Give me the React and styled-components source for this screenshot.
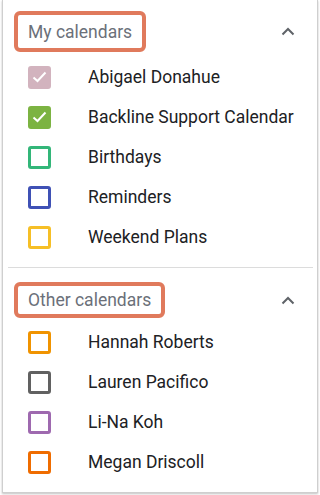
import React from "react";
import styled, { createGlobalStyle } from "styled-components";

const Global = createGlobalStyle`
  html, body { margin: 0; padding: 0; background: #ffffff; }
  body { font-family: Roboto, "Noto Sans", Arial, sans-serif; }
`;

const Page = styled.div`
  padding-left: 2px;
  width: 320px;
  height: 495px;
  box-sizing: border-box;
  overflow: hidden;
`;

const Panel = styled.div`
  width: 316px;
  height: 493px;
  box-sizing: border-box;
  background: #fff;
  border: 1px solid #cfcfcf;
  border-top: none;
  box-shadow: 0 1px 2px rgba(0, 0, 0, 0.25);
  display: flex;
  flex-direction: column;
`;

const Section = styled.section`
  display: flex;
  flex-direction: column;
  padding-top: ${(p) => p.$top}px;
`;

const Header = styled.div`
  display: flex;
  align-items: center;
  justify-content: space-between;
  padding: 0 22px 0 11px;
`;

const Title = styled.span`
  box-sizing: border-box;
  height: ${(p) => p.$h}px;
  display: inline-flex;
  align-items: center;
  padding: 0 10px;
  border: 4px solid #e07a5c;
  border-radius: 6px;
  color: #6b7079;
  font-size: 17.5px;
`;

const Chevron = () => (
  <svg width="14" height="9" viewBox="0 0 14 9">
    <polyline
      points="1.5,7.5 7,2 12.5,7.5"
      fill="none"
      stroke="#5f6368"
      strokeWidth="2"
    />
  </svg>
);

const List = styled.ul`
  list-style: none;
  margin: ${(p) => p.$gap}px 0 0;
  padding: 0;
`;

const Row = styled.li`
  height: 40px;
  display: flex;
  align-items: center;
  gap: 37px;
  padding-left: 25px;
  color: #202124;
  font-size: 17.5px;
`;

const Box = styled.span`
  box-sizing: border-box;
  width: 23px;
  height: 23px;
  border-radius: 3px;
  border: 3px solid ${(p) => p.$color};
  background: ${(p) => (p.$checked ? p.$color : "transparent")};
  display: inline-flex;
  align-items: center;
  justify-content: center;
  flex: none;
`;

const Divider = styled.hr`
  border: none;
  border-top: 1px solid #dcdcdc;
  margin: 10px 4px 0 5px;
`;

const Check = () => (
  <svg width="15" height="12" viewBox="0 0 15 12">
    <polyline
      points="1.5,6.5 5.5,10 13.5,1.5"
      fill="none"
      stroke="#ffffff"
      strokeWidth="2"
    />
  </svg>
);

const mine = [
  { name: "Abigael Donahue", color: "#d2b3be", checked: true },
  { name: "Backline Support Calendar", color: "#7cb342", checked: true },
  { name: "Birthdays", color: "#33b679" },
  { name: "Reminders", color: "#3f51b5" },
  { name: "Weekend Plans", color: "#f6bf26" },
];

const others = [
  { name: "Hannah Roberts", color: "#f09300" },
  { name: "Lauren Pacifico", color: "#616161" },
  { name: "Li-Na Koh", color: "#9e69af" },
  { name: "Megan Driscoll", color: "#ef6c00" },
];

const Calendar = ({ item }) => (
  <Row>
    <Box $color={item.color} $checked={item.checked}>
      {item.checked && <Check />}
    </Box>
    <span>{item.name}</span>
  </Row>
);

export default function App() {
  return (
    <Page>
      <Global />
      <Panel>
        <Section $top={11}>
          <Header>
            <Title $h={41}>My calendars</Title>
            <Chevron />
          </Header>
          <List $gap={5}>
            {mine.map((c) => (
              <Calendar key={c.name} item={c} />
            ))}
          </List>
        </Section>
        <Divider />
        <Section $top={14}>
          <Header>
            <Title $h={36}>Other calendars</Title>
            <Chevron />
          </Header>
          <List $gap={4}>
            {others.map((c) => (
              <Calendar key={c.name} item={c} />
            ))}
          </List>
        </Section>
      </Panel>
    </Page>
  );
}
